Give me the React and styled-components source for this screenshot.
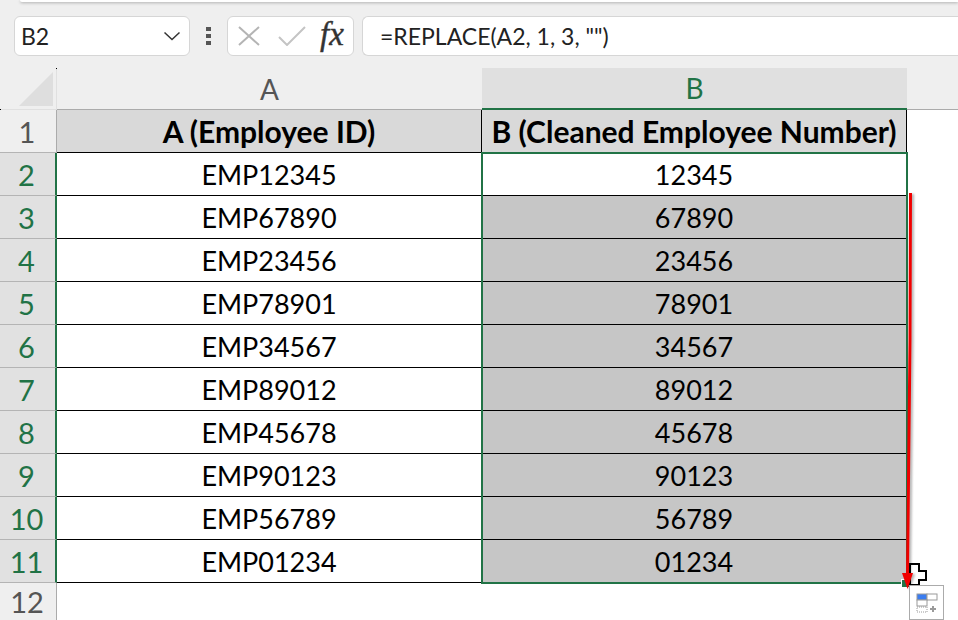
import React from 'react';
import styled, { createGlobalStyle } from 'styled-components';

const GlobalStyle = createGlobalStyle`
  html, body {
    margin: 0;
    padding: 0;
    background: #fff;
    overflow: hidden;
  }
  body {
    font-family: Lato, "Liberation Sans", sans-serif;
  }
`;

const Window = styled.div`
  position: relative;
  width: 958px;
  height: 620px;
  overflow: hidden;
  background: #fff;
`;

const TopChrome = styled.div`
  height: 68px;
  background: #efefef;
`;

const RibbonEdge = styled.div`
  height: 2px;
  margin-left: 20px;
  background: #fff;
  box-shadow: 0 1px 3px rgba(0, 0, 0, 0.3);
  border-bottom-left-radius: 4px;
`;

const FormulaBar = styled.div`
  display: flex;
  align-items: stretch;
  height: 40px;
  margin-top: 14px;
  padding-left: 14px;
`;

const NameBox = styled.div`
  width: 176px;
  box-sizing: border-box;
  display: flex;
  align-items: center;
  justify-content: space-between;
  padding: 0 8px 0 6px;
  background: #fff;
  border: 1px solid #d6d6d6;
  border-radius: 6px;
  font-size: 23px;
  color: #222;
`;

const Dots = styled.div`
  width: 37px;
  display: flex;
  flex-direction: column;
  align-items: center;
  justify-content: center;
  gap: 3px;
`;

const Dot = styled.span`
  width: 5px;
  height: 4px;
  background: #555;
`;

const FxBox = styled.div`
  width: 127px;
  box-sizing: border-box;
  display: flex;
  align-items: center;
  gap: 17px;
  padding-left: 9px;
  background: #fff;
  border: 1px solid #d6d6d6;
  border-radius: 6px;
`;

const FxLabel = styled.span`
  font-family: "Liberation Serif", serif;
  font-style: italic;
  font-size: 33px;
  line-height: 1;
  color: #333;
  -webkit-text-stroke: 0.4px #333;
  margin: -4px 0 0 -3px;
`;

const FormulaInput = styled.div`
  flex: 1;
  margin-left: 8px;
  display: flex;
  align-items: center;
  padding-left: 17px;
  background: #fff;
  border: 1px solid #d6d6d6;
  border-right: none;
  border-radius: 6px 0 0 6px;
  font-size: 23px;
  color: #222;
`;

const Sheet = styled.div`
  display: grid;
  grid-template-columns: 57px 425px 425px 51px;
  grid-template-rows: 42px 43px repeat(10, 43px) 38px;
`;

const Corner = styled.div`
  position: relative;
  background: #efefef;
  border-right: 1px solid #e0e0e0;
  border-bottom: 1px solid #e0e0e0;
  box-sizing: border-box;

  &::before,
  &::after {
    content: '';
    position: absolute;
    width: 1px;
    height: 1px;
    background: #000;
  }
  &::before {
    right: -1px;
    top: 0;
  }
  &::after {
    left: 0;
    bottom: -1px;
  }
`;

const CornerTriangle = styled.div`
  position: absolute;
  right: 3px;
  bottom: 3px;
  width: 34px;
  height: 34px;
  background: #dedede;
  clip-path: polygon(100% 0, 100% 100%, 0 100%);
`;

const ColHeader = styled.div`
  display: flex;
  align-items: center;
  justify-content: center;
  box-sizing: border-box;
  font-size: 28px;
  background: ${(p) => (p.$active ? '#e0e0e0' : '#efefef')};
  color: ${(p) => (p.$active ? '#217346' : '#555')};
  border-bottom: ${(p) => (p.$active ? '2px solid #217346' : '1px solid #ababab')};
`;

const HeaderRest = styled.div`
  background: #efefef;
  border-bottom: 1px solid #ababab;
`;

const RowHeader = styled.div`
  display: flex;
  align-items: center;
  justify-content: center;
  box-sizing: border-box;
  padding-right: 2px;
  font-size: 29px;
  background: ${(p) => (p.$active ? '#e1e1e1' : '#efefef')};
  color: ${(p) => (p.$active ? '#217346' : '#555')};
  border-bottom: 1px solid #b4b4b4;
  border-right: ${(p) => (p.$active ? '2px solid #217346' : '1px solid #ababab')};
`;

const TitleCell = styled.div`
  display: flex;
  align-items: center;
  justify-content: center;
  box-sizing: border-box;
  background: #d9d9d9;
  border-right: 1px solid #000;
  border-bottom: 1px solid #000;
  font-weight: 700;
  font-size: 30px;
  color: #000;
  white-space: nowrap;
`;

const Cell = styled.div`
  display: flex;
  align-items: center;
  justify-content: center;
  box-sizing: border-box;
  font-size: 27px;
  color: #000;
  background: ${(p) => (p.$selected ? '#c6c6c6' : '#fff')};
  border-right: 1px solid #000;
  border-bottom: 1px solid #000;
`;

const EmptyCell = styled.div`
  background: #fff;
`;

const Selection = styled.div`
  position: absolute;
  left: 481px;
  top: 152px;
  width: 427px;
  height: 432px;
  box-sizing: border-box;
  border: 2px solid #217346;
  pointer-events: none;
`;

const Handle = styled.div`
  position: absolute;
  left: 901px;
  top: 579px;
  width: 7px;
  height: 7px;
  background: #217346;
  border: 1px solid #fff;
`;

const DragArrow = styled.svg`
  position: absolute;
  left: 896px;
  top: 190px;
  filter: drop-shadow(2px 1px 1px rgba(0, 0, 0, 0.3));
`;

const Cursor = styled.svg`
  position: absolute;
  left: 904px;
  top: 562px;
`;

const PasteOptions = styled.div`
  position: absolute;
  left: 909px;
  top: 585px;
  width: 35px;
  height: 35px;
  box-sizing: border-box;
  background: #fff;
  border: 1px solid #ababab;
  display: flex;
  align-items: center;
  justify-content: center;
`;

const rows = [
  ['EMP12345', '12345'],
  ['EMP67890', '67890'],
  ['EMP23456', '23456'],
  ['EMP78901', '78901'],
  ['EMP34567', '34567'],
  ['EMP89012', '89012'],
  ['EMP45678', '45678'],
  ['EMP90123', '90123'],
  ['EMP56789', '56789'],
  ['EMP01234', '01234'],
];

export default function App() {
  return (
    <Window>
      <GlobalStyle />
      <TopChrome>
        <RibbonEdge />
        <FormulaBar>
          <NameBox>
            B2
            <svg width="18" height="10" viewBox="0 0 18 10">
              <path d="M1.5 1.5 L9 8.5 L16.5 1.5" fill="none" stroke="#333" strokeWidth="1.5" />
            </svg>
          </NameBox>
          <Dots>
            <Dot />
            <Dot />
            <Dot />
          </Dots>
          <FxBox>
            <svg width="24" height="22" viewBox="0 0 24 22">
              <path d="M2 2 L22 20 M22 2 L2 20" stroke="#b4b4b4" strokeWidth="2" fill="none" />
            </svg>
            <svg width="28" height="20" viewBox="0 0 28 20">
              <path d="M1 11 L9 19 L27 1" stroke="#c4c4c4" strokeWidth="2" fill="none" />
            </svg>
            <FxLabel>fx</FxLabel>
          </FxBox>
          <FormulaInput>=REPLACE(A2, 1, 3, "")</FormulaInput>
        </FormulaBar>
      </TopChrome>
      <Sheet>
        <Corner>
          <CornerTriangle />
        </Corner>
        <ColHeader>A</ColHeader>
        <ColHeader $active>B</ColHeader>
        <HeaderRest />

        <RowHeader>1</RowHeader>
        <TitleCell>A (Employee ID)</TitleCell>
        <TitleCell>B (Cleaned Employee Number)</TitleCell>
        <EmptyCell />

        {rows.map(([id, num], i) => (
          <React.Fragment key={id}>
            <RowHeader $active>{i + 2}</RowHeader>
            <Cell>{id}</Cell>
            <Cell $selected={i > 0}>{num}</Cell>
            <EmptyCell />
          </React.Fragment>
        ))}

        <RowHeader>12</RowHeader>
        <EmptyCell />
        <EmptyCell />
        <EmptyCell />
      </Sheet>

      <Selection />
      <Handle />
      <Cursor width="24" height="24" viewBox="0 0 24 24">
        <path
          d="M6 2 H15 V9 H22 V18 H15 V23 H6 Z"
          fill="#fff"
          stroke="#000"
          strokeWidth="2"
        />
      </Cursor>
      <DragArrow width="24" height="402" viewBox="0 0 24 402">
        <path d="M14.5 3 L14 150 L11.5 385" stroke="#f00000" strokeWidth="3" fill="none" />
        <path d="M6 383 H17 L11.5 399 Z" fill="#f00000" />
      </DragArrow>
      <PasteOptions>
        <svg width="22" height="20" viewBox="0 0 22 20">
          <rect x="1" y="1" width="10" height="6" fill="#3b7df0" stroke="#9a9a9a" />
          <rect x="11" y="1" width="10" height="6" fill="#fff" stroke="#9a9a9a" />
          <rect x="1" y="7" width="10" height="6" fill="#fff" stroke="#9a9a9a" />
          <rect x="1" y="14" width="10" height="5" fill="none" stroke="#9a9a9a" strokeDasharray="1 1" />
          <path d="M17 13 V19 M14 16 H20" stroke="#9a9a9a" strokeWidth="2" />
        </svg>
      </PasteOptions>
    </Window>
  );
}
